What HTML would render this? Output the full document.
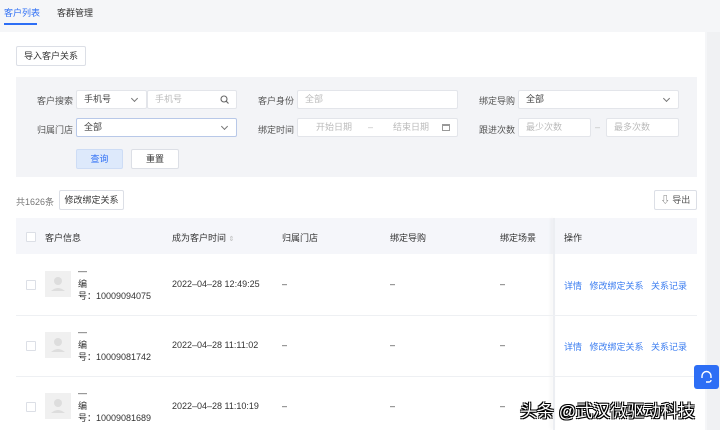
<!DOCTYPE html>
<html><head><meta charset="utf-8"><style>
*{margin:0;padding:0;box-sizing:border-box}
body{width:720px;height:430px;overflow:hidden;background:#f5f6f8;font-family:"Liberation Sans","Noto Sans CJK SC",sans-serif;font-size:9px;color:#333;position:relative}
.a{position:absolute}
.box{position:absolute;background:#fff;border:1px solid #e3e5ea;border-radius:2px;height:19px;line-height:17px;padding-left:7px;color:#bbb}
.lbl{position:absolute;color:#555}
.btn{position:absolute;border:1px solid #dcdfe6;background:#fff;height:20px;line-height:18px;text-align:center;border-radius:2px;color:#333}
.chev{position:absolute;right:9px;top:5px;width:5px;height:5px;border-right:1px solid #777;border-bottom:1px solid #777;transform:rotate(45deg)}
.cb{position:absolute;width:10px;height:10px;border:1px solid #dcdfe6;background:#fff;border-radius:1px}
.th{position:absolute;top:231px;color:#333}
.link{color:#3a7cf0;word-spacing:0}
.av{position:absolute;left:45px;top:17px;width:26px;height:26px;background:#f0f0f0}
</style></head><body>
<div class="a" style="left:4px;top:6px;color:#2d6ef5">客户列表</div>
<div class="a" style="left:57px;top:6px;color:#333">客群管理</div>
<div class="a" style="left:4px;top:23px;width:33px;height:2px;background:#2d6ef5"></div>
<div class="a" style="left:0;top:32px;width:705px;height:398px;background:#fff"></div>
<div class="a" style="left:707px;top:32px;width:13px;height:398px;background:#f0f1f3"></div>
<div class="btn" style="left:16px;top:46px;width:70px">导入客户关系</div>
<div class="a" style="left:16px;top:77px;width:681px;height:100px;background:#f3f4f7"></div>
<div class="lbl" style="left:37px;top:94px">客户搜索</div>
<div class="box" style="left:76px;top:90px;width:71px;color:#444">手机号<div class="chev"></div></div>
<div class="box" style="left:147px;top:90px;width:90px">手机号<svg class="a" style="right:7px;top:4px" width="9" height="9" viewBox="0 0 9 9"><circle cx="4" cy="4" r="3" fill="none" stroke="#666" stroke-width="1.1"/><path d="M6.2 6.2L8.5 8.5" stroke="#666" stroke-width="1.1"/></svg></div>
<div class="lbl" style="left:258px;top:94px">客户身份</div>
<div class="box" style="left:297px;top:90px;width:161px">全部</div>
<div class="lbl" style="left:479px;top:94px">绑定导购</div>
<div class="box" style="left:518px;top:90px;width:161px;color:#444">全部<div class="chev"></div></div>
<div class="lbl" style="left:37px;top:123px">归属门店</div>
<div class="box" style="left:76px;top:118px;width:161px;color:#444;border-color:#b8c8e8">全部<div class="chev"></div></div>
<div class="lbl" style="left:258px;top:123px">绑定时间</div>
<div class="box" style="left:297px;top:118px;width:161px"><span class="a" style="left:18px">开始日期</span><span class="a" style="left:70px">–</span><span class="a" style="left:95px">结束日期</span><span class="a" style="left:144px;top:5px;width:8px;height:7px;border:1px solid #999;border-top-width:2px"></span></div>
<div class="lbl" style="left:479px;top:123px">跟进次数</div>
<div class="box" style="left:518px;top:118px;width:73px">最少次数</div>
<div class="a" style="left:595px;top:122px;color:#bbb">–</div>
<div class="box" style="left:606px;top:118px;width:73px">最多次数</div>
<div class="btn" style="left:76px;top:149px;width:47px;background:#dde9fb;border-color:#cddcf5;color:#2d6ef5">查询</div>
<div class="btn" style="left:131px;top:149px;width:48px">重置</div>
<div class="a" style="left:16px;top:195px;color:#777">共1626条</div>
<div class="btn" style="left:59px;top:190px;width:65px">修改绑定关系</div>
<div class="btn" style="left:654px;top:190px;width:43px;color:#555">⇩ 导出</div>
<div class="a" style="left:16px;top:218px;width:681px;height:36px;background:#f5f6fa"></div>
<div class="a" style="left:553px;top:218px;width:2px;height:212px;background:#eceef2;box-shadow:-2px 0 3px rgba(0,0,0,.06)"></div>
<div class="cb" style="left:26px;top:232px"></div>
<div class="th" style="left:45px">客户信息</div>
<div class="th" style="left:172px">成为客户时间 <span style="color:#bbb;font-size:7px">⇕</span></div>
<div class="th" style="left:282px">归属门店</div>
<div class="th" style="left:390px">绑定导购</div>
<div class="th" style="left:500px">绑定场景</div>
<div class="th" style="left:564px">操作</div>
<div class="a" style="left:16px;top:315px;width:681px;height:1px;background:#eef0f3"></div>
<div class="a" style="left:16px;top:376px;width:681px;height:1px;background:#eef0f3"></div>
<svg width="0" height="0" style="position:absolute"><defs><g id="p"><circle cx="13" cy="10" r="4" fill="#ddd"/><path d="M6 20q7-6 14 0z" fill="#ddd"/></g></defs></svg>
<div class="a" style="left:0;top:254px;width:700px;height:61px">
<div class="cb" style="left:26px;top:26px"></div>
<div class="av"><svg width="26" height="26"><use href="#p"/></svg></div>
<div class="a" style="left:78px;top:11px;line-height:12.5px">—<br>编<br>号：10009094075</div>
<div class="a" style="left:172px;top:25px">2022–04–28 12:49:25</div>
<div class="a" style="left:282px;top:25px">–</div><div class="a" style="left:390px;top:25px">–</div><div class="a" style="left:500px;top:25px">–</div>
<div class="a link" style="left:564px;top:25px">详情&nbsp;&nbsp;&nbsp;修改绑定关系&nbsp;&nbsp;&nbsp;关系记录</div>
</div>
<div class="a" style="left:0;top:315px;width:700px;height:61px">
<div class="cb" style="left:26px;top:26px"></div>
<div class="av"><svg width="26" height="26"><use href="#p"/></svg></div>
<div class="a" style="left:78px;top:11px;line-height:12.5px">—<br>编<br>号：10009081742</div>
<div class="a" style="left:172px;top:25px">2022–04–28 11:11:02</div>
<div class="a" style="left:282px;top:25px">–</div><div class="a" style="left:390px;top:25px">–</div><div class="a" style="left:500px;top:25px">–</div>
<div class="a link" style="left:564px;top:25px">详情&nbsp;&nbsp;&nbsp;修改绑定关系&nbsp;&nbsp;&nbsp;关系记录</div>
</div>
<div class="a" style="left:0;top:376px;width:700px;height:54px">
<div class="cb" style="left:26px;top:26px"></div>
<div class="av"><svg width="26" height="26"><use href="#p"/></svg></div>
<div class="a" style="left:78px;top:11px;line-height:12.5px">—<br>编<br>号：10009081689</div>
<div class="a" style="left:172px;top:25px">2022–04–28 11:10:19</div>
<div class="a" style="left:282px;top:25px">–</div><div class="a" style="left:390px;top:25px">–</div><div class="a" style="left:500px;top:25px">–</div>
</div>
<div class="a" style="left:694px;top:365px;width:25px;height:24px;background:#2d6ef5;border-radius:3px"><svg class="a" style="left:6px;top:5px" width="13" height="14" viewBox="0 0 13 14"><path d="M2 8V6a4.5 4.5 0 0 1 9 0v2M6 12h3a2 2 0 0 0 2-2" fill="none" stroke="#fff" stroke-width="1.4"/></svg></div>
<div class="a" style="left:520px;top:397px;font-size:17px;color:#fff;text-shadow:-1px -1px 0 #000,1px -1px 0 #000,-1px 1px 0 #000,1px 1px 0 #000">头条 @武汉微驱动科技</div>
</body></html>
